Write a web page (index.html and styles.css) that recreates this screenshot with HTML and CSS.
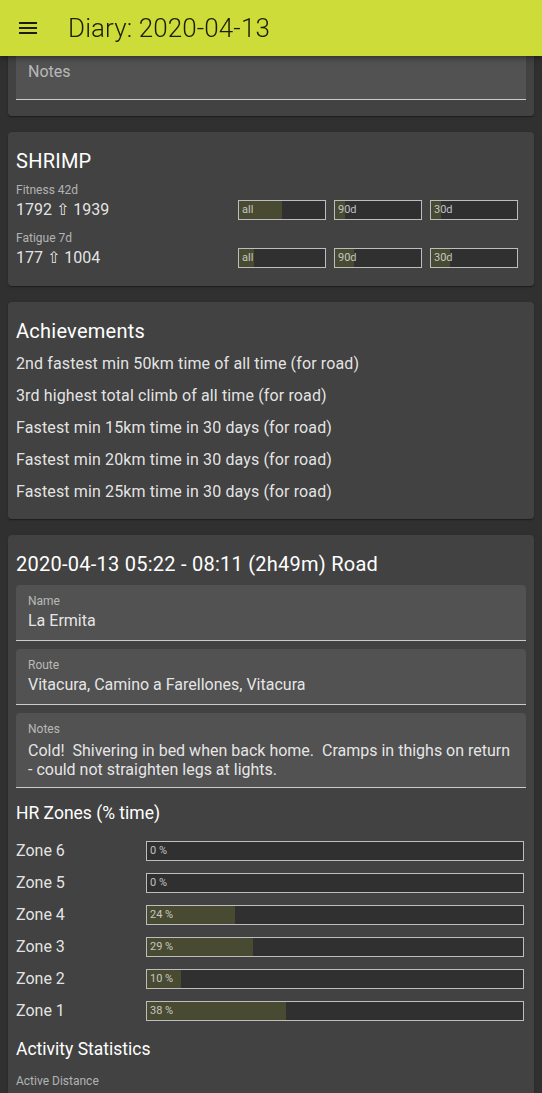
FILE: index.html
```html
<!DOCTYPE html>
<html lang="en">
<head>
<meta charset="utf-8">
<title>Diary: 2020-04-13</title>
<link rel="stylesheet" href="styles.css">
</head>
<body>
<header class="appbar">
  <svg class="menu-icon" viewBox="0 0 24 24" width="24" height="24" aria-hidden="true"><path d="M3 18h18v-2H3v2zm0-5h18v-2H3v2zm0-7v2h18V6H3z"/></svg>
  <h1 class="appbar-title">Diary: 2020-04-13</h1>
</header>
<main class="content">
  <section class="card card-top">
    <div class="field field-empty"><span class="placeholder">Notes</span></div>
  </section>

  <section class="card">
    <h2 class="card-title">SHRIMP</h2>
    <div class="metric">
      <div class="metric-label">Fitness 42d</div>
      <div class="metric-row">
        <div class="metric-value">1792 ⇧ 1939</div>
        <div class="mini-bars">
          <div class="bar mini" style="--p:50%">all</div>
          <div class="bar mini" style="--p:11.5%">90d</div>
          <div class="bar mini" style="--p:11.5%">30d</div>
        </div>
      </div>
    </div>
    <div class="metric">
      <div class="metric-label">Fatigue 7d</div>
      <div class="metric-row">
        <div class="metric-value">177 ⇧ 1004</div>
        <div class="mini-bars">
          <div class="bar mini" style="--p:17.5%">all</div>
          <div class="bar mini" style="--p:22%">90d</div>
          <div class="bar mini" style="--p:22%">30d</div>
        </div>
      </div>
    </div>
  </section>

  <section class="card card-achievements">
    <h2 class="card-title tight">Achievements</h2>
    <ul class="achievements">
      <li>2nd fastest min 50km time of all time (for road)</li>
      <li>3rd highest total climb of all time (for road)</li>
      <li>Fastest min 15km time in 30 days (for road)</li>
      <li>Fastest min 20km time in 30 days (for road)</li>
      <li>Fastest min 25km time in 30 days (for road)</li>
    </ul>
  </section>

  <section class="card">
    <h2 class="card-title">2020-04-13 05:22 - 08:11 (2h49m) Road</h2>
    <div class="fields">
      <div class="field">
        <span class="field-label">Name</span>
        <span class="field-value">La Ermita</span>
      </div>
      <div class="field">
        <span class="field-label">Route</span>
        <span class="field-value">Vitacura, Camino a Farellones, Vitacura</span>
      </div>
      <div class="field field-multi">
        <span class="field-label">Notes</span>
        <span class="field-value">Cold!  Shivering in bed when back home.  Cramps in thighs on return - could not straighten legs at lights.</span>
      </div>
    </div>

    <h3 class="section-title">HR Zones (% time)</h3>
    <div class="zones">
      <div class="zone"><span class="zone-name">Zone 6</span><div class="bar wide" style="--p:0%">0 %</div></div>
      <div class="zone"><span class="zone-name">Zone 5</span><div class="bar wide" style="--p:0%">0 %</div></div>
      <div class="zone"><span class="zone-name">Zone 4</span><div class="bar wide" style="--p:23.3%">24 %</div></div>
      <div class="zone"><span class="zone-name">Zone 3</span><div class="bar wide" style="--p:28.3%">29 %</div></div>
      <div class="zone"><span class="zone-name">Zone 2</span><div class="bar wide" style="--p:9%">10 %</div></div>
      <div class="zone"><span class="zone-name">Zone 1</span><div class="bar wide" style="--p:37%">38 %</div></div>
    </div>

    <h3 class="section-title">Activity Statistics</h3>
    <div class="stat-label">Active Distance</div>
  </section>
</main>
</body>
</html>
```

FILE: styles.css
```css
* { box-sizing: border-box; }

body {
  margin: 0;
  background: #303030;
  font-family: Roboto, "Noto Sans", "DejaVu Sans", sans-serif;
  color: rgba(255, 255, 255, 0.87);
}

.appbar {
  position: fixed;
  top: 0;
  left: 0;
  right: 0;
  height: 56px;
  z-index: 10;
  display: flex;
  align-items: center;
  gap: 28px;
  padding-left: 16px;
  background: #cddc39;
  color: rgba(0, 0, 0, 0.87);
  box-shadow: 0 2px 4px -1px rgba(0, 0, 0, 0.2), 0 4px 5px 0 rgba(0, 0, 0, 0.14), 0 1px 10px 0 rgba(0, 0, 0, 0.12);
}

.menu-icon { fill: rgba(0, 0, 0, 0.87); flex: none; }

.appbar-title {
  margin: 0;
  font-size: 26px;
  font-weight: 300;
  line-height: 32px;
  letter-spacing: 0.1px;
}

.content {
  display: flex;
  flex-direction: column;
  gap: 16px;
  padding: 36px 8px 0;
}

.card {
  background: #424242;
  border-radius: 4px;
  padding: 16px 8px;
  box-shadow: 0 2px 1px -1px rgba(0, 0, 0, 0.2), 0 1px 1px 0 rgba(0, 0, 0, 0.14), 0 1px 3px 0 rgba(0, 0, 0, 0.12);
}

.card-top { padding-top: 8px; }

.card-achievements { padding-bottom: 11px; }

.card-title {
  margin: 0 0 8px;
  font-size: 20px;
  font-weight: 400;
  line-height: 26px;
  letter-spacing: 0.25px;
  color: #fff;
}

.card-title.tight { margin-bottom: 4px; }

/* text fields */
.fields {
  display: flex;
  flex-direction: column;
  gap: 8px;
}

.field {
  display: flex;
  flex-direction: column;
  padding: 8px 12px 9px;
  background: #525252;
  border-radius: 4px 4px 0 0;
  border-bottom: 1px solid rgba(255, 255, 255, 0.7);
}

.field-empty {
  height: 56px;
  justify-content: center;
  padding: 0 12px;
}

.placeholder {
  font-size: 16px;
  line-height: 20px;
  color: rgba(255, 255, 255, 0.6);
}

.field-label {
  font-size: 12px;
  line-height: 16px;
  color: rgba(255, 255, 255, 0.6);
}

.field-value {
  margin-top: 2px;
  font-size: 16px;
  line-height: 20px;
  color: rgba(255, 255, 255, 0.87);
  white-space: pre-wrap;
}

.field-multi { padding-bottom: 8px; }

.field-multi .field-value {
  margin-top: 4px;
  line-height: 19px;
}

/* metrics */
.metric + .metric { margin-top: 8px; }

.metric-label {
  font-size: 12px;
  line-height: 16px;
  color: rgba(255, 255, 255, 0.6);
}

.metric-row {
  display: flex;
  align-items: center;
}

.metric-value {
  flex: 1;
  font-size: 16px;
  line-height: 24px;
}

.mini-bars {
  display: flex;
  gap: 8px;
  margin-right: 8px;
}

.bar {
  height: 20px;
  border: 1px solid #bdbdbd;
  padding-left: 3px;
  font-size: 11px;
  line-height: 18px;
  color: rgba(255, 255, 255, 0.7);
  background: linear-gradient(to right, #484a31 var(--p), #303030 var(--p));
  white-space: nowrap;
  overflow: hidden;
}

.bar.mini { width: 88px; }

.bar.wide { margin-right: 2px; }

/* achievements */
.achievements {
  list-style: none;
  margin: 0;
  padding: 0;
}

.achievements li {
  font-size: 16px;
  line-height: 32px;
  letter-spacing: 0.13px;
}

/* sections */
.section-title {
  margin: 13px 0 10px;
  font-size: 17.5px;
  font-weight: 400;
  line-height: 24px;
  color: #fff;
}

.zones + .section-title { margin: 10px 0 12px; }

.zone {
  display: grid;
  grid-template-columns: 130px 1fr;
  align-items: center;
  height: 32px;
}

.zone-name {
  font-size: 16px;
  line-height: 32px;
}

.stat-label {
  font-size: 12px;
  line-height: 16px;
  color: rgba(255, 255, 255, 0.6);
}
```
